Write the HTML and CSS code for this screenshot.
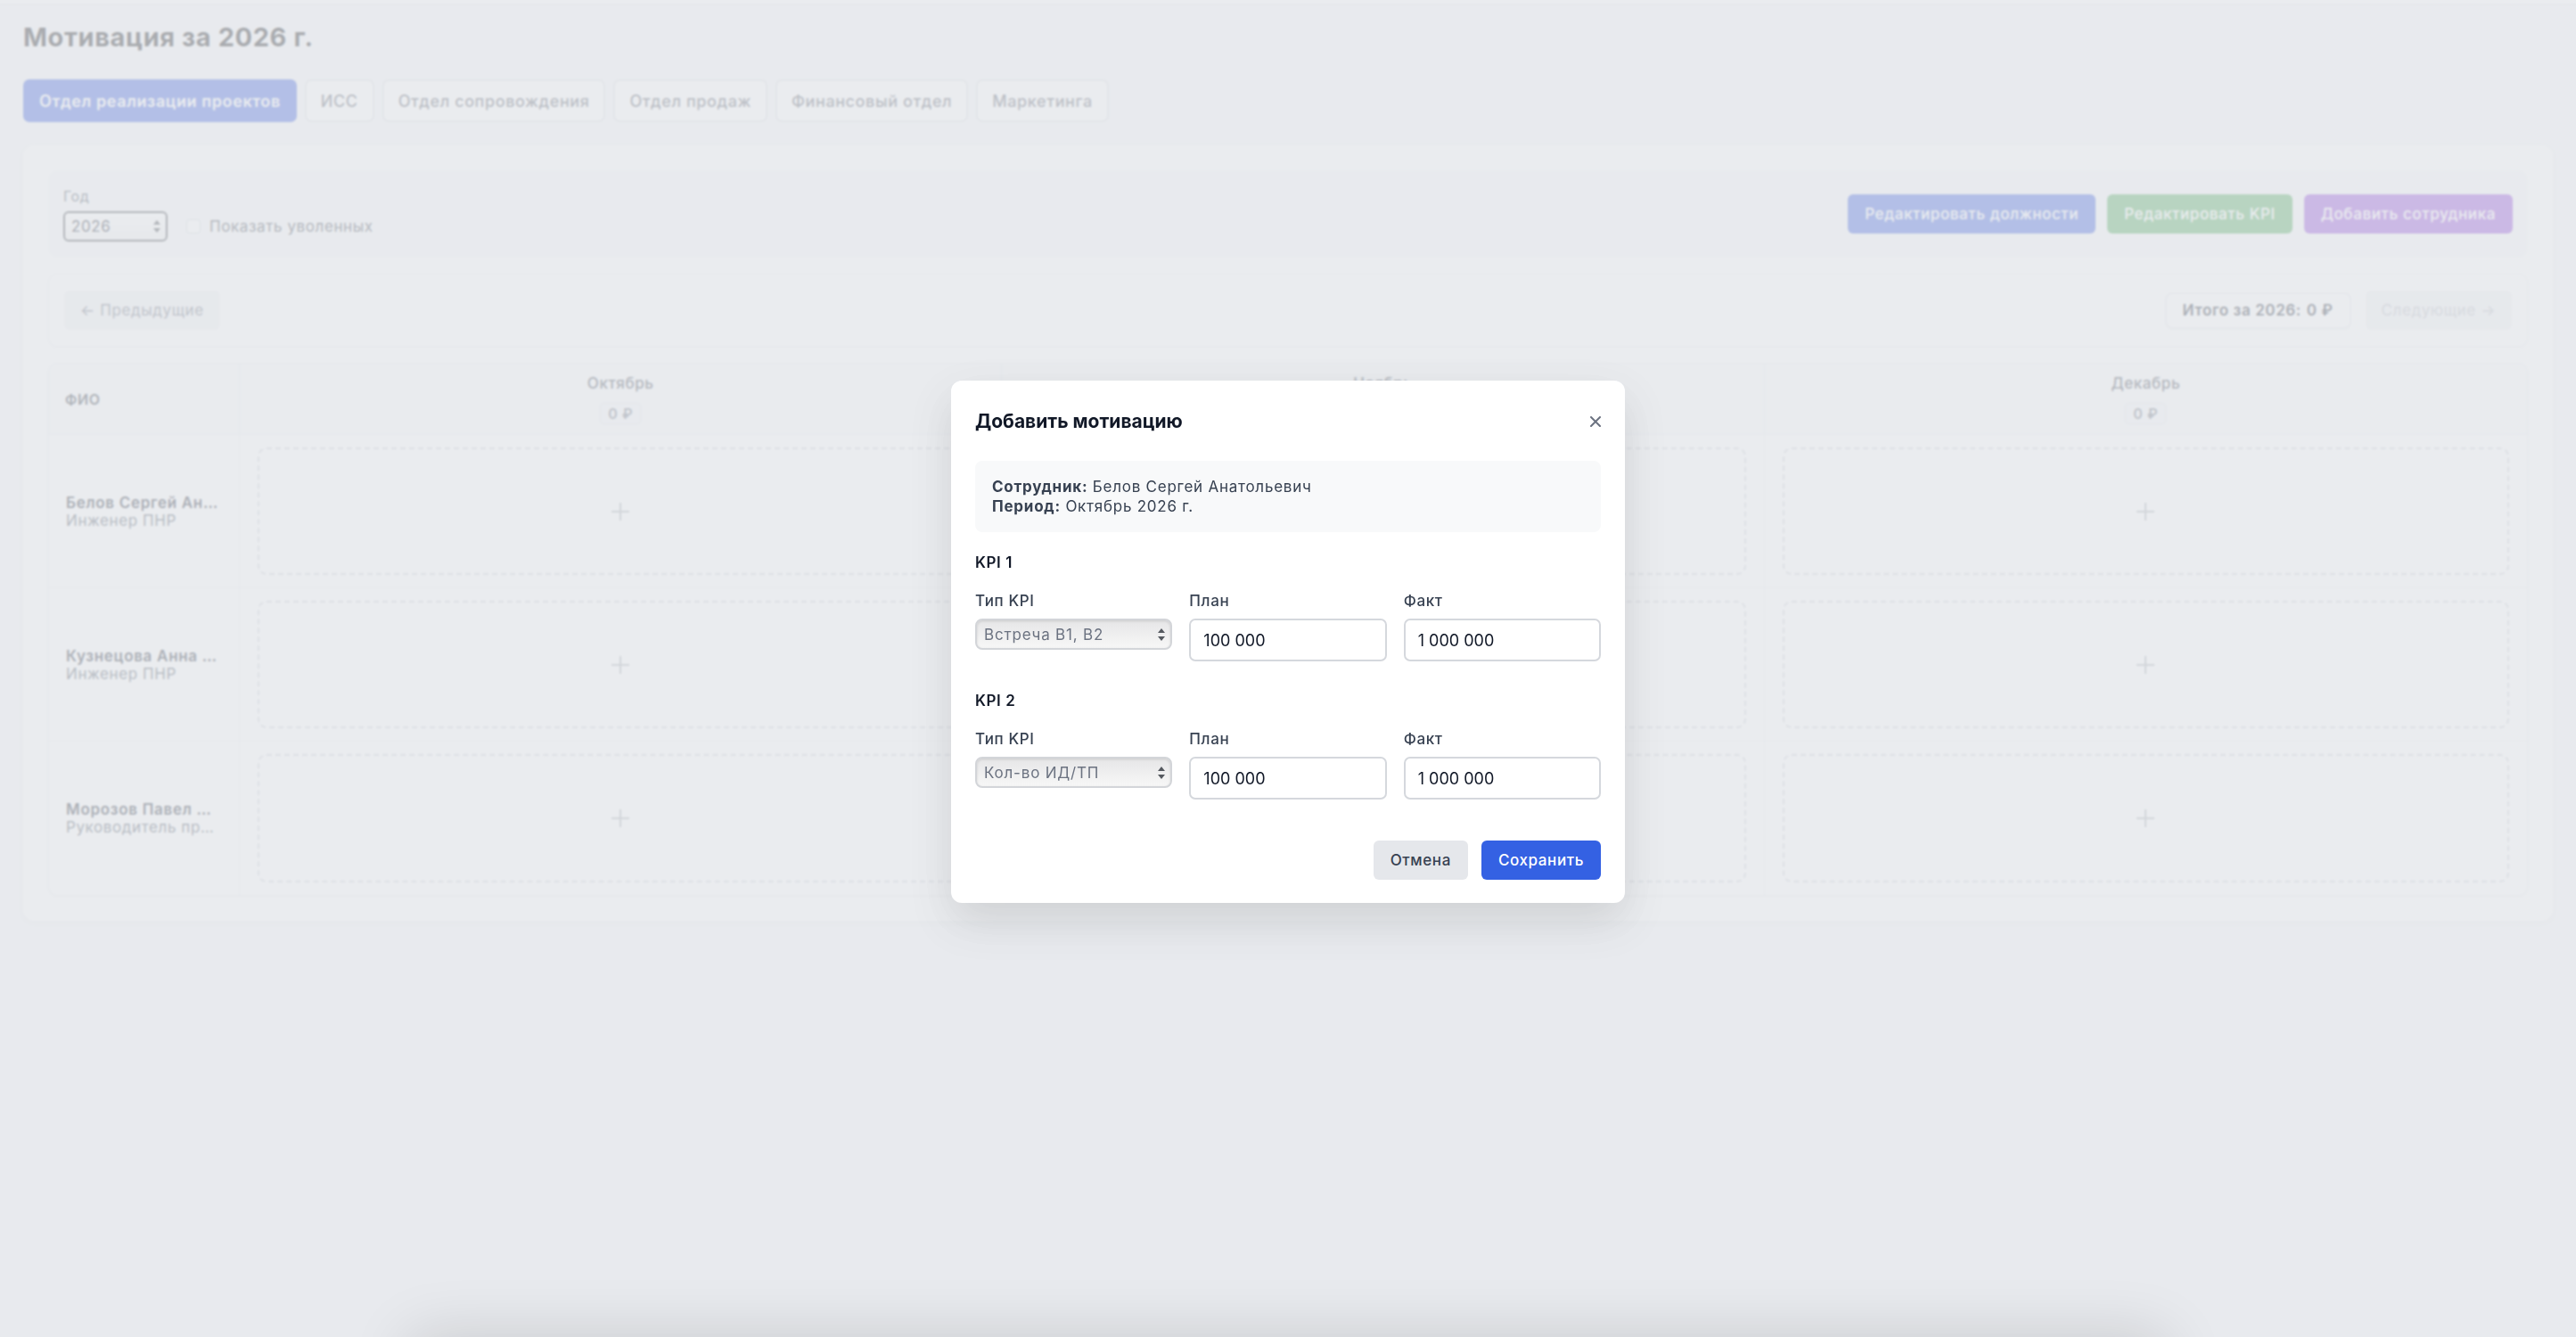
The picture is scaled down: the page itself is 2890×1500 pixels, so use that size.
FILE: index.html
```html
<!DOCTYPE html>
<html lang="ru">
<head>
  <meta charset="UTF-8">
  <meta name="viewport" content="width=device-width, initial-scale=1.0">
  <title>Мотивация за 2026 г.</title>
  <link rel="stylesheet" href="styles.css">
</head>
<body>

<div class="topbar"></div>

<main class="page">
  <h1 class="page-title">Мотивация за 2026 г.</h1>

  <nav class="dept-tabs">
    <button class="dept-tab active">Отдел реализации проектов</button>
    <button class="dept-tab">ИСС</button>
    <button class="dept-tab">Отдел сопровождения</button>
    <button class="dept-tab">Отдел продаж</button>
    <button class="dept-tab">Финансовый отдел</button>
    <button class="dept-tab">Маркетинга</button>
  </nav>

  <section class="motivation-card">
    <div class="filters">
      <div class="filters-left">
        <label class="field-label">Год</label>
        <div class="filters-row">
          <div class="select-wrap year-select">
            <select>
              <option>2026</option>
              <option>2025</option>
            </select>
            <svg class="select-arrows" width="8" height="14" viewBox="0 0 8 14"><path d="M4 0L8 5H0Z M4 14L8 9H0Z" fill="#3a3e45"/></svg>
          </div>
          <label class="checkbox"><input type="checkbox"> Показать уволенных</label>
        </div>
      </div>
      <div class="filters-actions">
        <button class="btn btn-blue">Редактировать должности</button>
        <button class="btn btn-green">Редактировать KPI</button>
        <button class="btn btn-purple">Добавить сотрудника</button>
      </div>
    </div>

    <div class="pager">
      <button class="pager-btn">← Предыдущие</button>
      <div class="pager-right">
        <div class="year-total">Итого за 2026: <span>0 ₽</span></div>
        <button class="pager-btn next">Следующие →</button>
      </div>
    </div>

    <div class="kpi-table">
      <div class="th th-fio">ФИО</div>
      <div class="th th-month"><span class="month-name">Октябрь</span><span class="month-sum">0 ₽</span></div>
      <div class="th th-month"><span class="month-name">Ноябрь</span><span class="month-sum">0 ₽</span></div>
      <div class="th th-month last"><span class="month-name">Декабрь</span><span class="month-sum">0 ₽</span></div>

      <div class="td name-cell">
        <div class="emp-name">Белов Сергей Анатольевич</div>
        <div class="emp-role">Инженер ПНР</div>
      </div>
      <div class="td slot-cell"><div class="add-slot"><svg width="20" height="20" viewBox="0 0 20 20"><path d="M10 0V20M0 10H20" stroke="#a9adb4" stroke-width="2"/></svg></div></div>
      <div class="td slot-cell"><div class="add-slot"><svg width="20" height="20" viewBox="0 0 20 20"><path d="M10 0V20M0 10H20" stroke="#a9adb4" stroke-width="2"/></svg></div></div>
      <div class="td slot-cell last"><div class="add-slot"><svg width="20" height="20" viewBox="0 0 20 20"><path d="M10 0V20M0 10H20" stroke="#a9adb4" stroke-width="2"/></svg></div></div>

      <div class="td name-cell">
        <div class="emp-name">Кузнецова Анна Викторовна</div>
        <div class="emp-role">Инженер ПНР</div>
      </div>
      <div class="td slot-cell"><div class="add-slot"><svg width="20" height="20" viewBox="0 0 20 20"><path d="M10 0V20M0 10H20" stroke="#a9adb4" stroke-width="2"/></svg></div></div>
      <div class="td slot-cell"><div class="add-slot"><svg width="20" height="20" viewBox="0 0 20 20"><path d="M10 0V20M0 10H20" stroke="#a9adb4" stroke-width="2"/></svg></div></div>
      <div class="td slot-cell last"><div class="add-slot"><svg width="20" height="20" viewBox="0 0 20 20"><path d="M10 0V20M0 10H20" stroke="#a9adb4" stroke-width="2"/></svg></div></div>

      <div class="td name-cell bottom">
        <div class="emp-name">Морозов Павел Игоревич</div>
        <div class="emp-role">Руководитель проекта</div>
      </div>
      <div class="td slot-cell bottom"><div class="add-slot"><svg width="20" height="20" viewBox="0 0 20 20"><path d="M10 0V20M0 10H20" stroke="#a9adb4" stroke-width="2"/></svg></div></div>
      <div class="td slot-cell bottom"><div class="add-slot"><svg width="20" height="20" viewBox="0 0 20 20"><path d="M10 0V20M0 10H20" stroke="#a9adb4" stroke-width="2"/></svg></div></div>
      <div class="td slot-cell bottom last"><div class="add-slot"><svg width="20" height="20" viewBox="0 0 20 20"><path d="M10 0V20M0 10H20" stroke="#a9adb4" stroke-width="2"/></svg></div></div>
    </div>
  </section>
</main>

<div class="modal-overlay">
  <div class="modal">
    <div class="modal-header">
      <h2 class="modal-title">Добавить мотивацию</h2>
      <button class="modal-close" aria-label="Закрыть">
        <svg width="12" height="12" viewBox="0 0 12 12"><path d="M1 1L11 11M11 1L1 11" stroke="#6b7280" stroke-width="2" stroke-linecap="round"/></svg>
      </button>
    </div>

    <div class="modal-info">
      <div><b>Сотрудник:</b> Белов Сергей Анатольевич</div>
      <div><b>Период:</b> Октябрь 2026 г.</div>
    </div>

    <div class="kpi-block">
      <div class="kpi-title">KPI 1</div>
      <div class="kpi-grid">
        <div>
          <label class="kpi-label">Тип KPI</label>
          <div class="select-wrap kpi-select">
            <select>
              <option>Встреча В1, В2</option>
              <option>Кол-во ИД/ТП</option>
            </select>
            <svg class="select-arrows" width="8" height="14" viewBox="0 0 8 14"><path d="M4 0L8 5H0Z M4 14L8 9H0Z" fill="#55595f"/></svg>
          </div>
        </div>
        <div>
          <label class="kpi-label">План</label>
          <input class="kpi-input" type="text" value="100 000">
        </div>
        <div>
          <label class="kpi-label">Факт</label>
          <input class="kpi-input" type="text" value="1 000 000">
        </div>
      </div>
    </div>

    <div class="kpi-block">
      <div class="kpi-title">KPI 2</div>
      <div class="kpi-grid">
        <div>
          <label class="kpi-label">Тип KPI</label>
          <div class="select-wrap kpi-select">
            <select>
              <option>Кол-во ИД/ТП</option>
              <option>Встреча В1, В2</option>
            </select>
            <svg class="select-arrows" width="8" height="14" viewBox="0 0 8 14"><path d="M4 0L8 5H0Z M4 14L8 9H0Z" fill="#55595f"/></svg>
          </div>
        </div>
        <div>
          <label class="kpi-label">План</label>
          <input class="kpi-input" type="text" value="100 000">
        </div>
        <div>
          <label class="kpi-label">Факт</label>
          <input class="kpi-input" type="text" value="1 000 000">
        </div>
      </div>
    </div>

    <div class="modal-footer">
      <button class="btn-cancel">Отмена</button>
      <button class="btn-save">Сохранить</button>
    </div>
  </div>
</div>

<div class="bottom-sheet"></div>

</body>
</html>
```

FILE: styles.css
```css
* {
  box-sizing: border-box;
}

body {
  margin: 0;
  min-height: 100vh;
  background-color: #f7f8fa;
  font-family: Inter, "Liberation Sans", sans-serif;
  letter-spacing: 0.6px;
  color: #1f2023;
}

button,
select {
  font-family: inherit;
  letter-spacing: inherit;
}

input {
  font-family: inherit;
}

.topbar {
  height: 4px;
  background-color: #fff;
  box-shadow: 0 1px 3px rgba(0, 0, 0, 0.08);
}

.page {
  padding: 20px 26px 26px;
}

.page-title {
  margin: 0;
  font-size: 29px;
  font-weight: 700;
  line-height: 36px;
  color: #1a1b1e;
}

/* department tabs */
.dept-tabs {
  display: flex;
  gap: 9px;
  margin-top: 29px;
}

.dept-tab {
  height: 48px;
  margin: 0;
  padding: 0 16px;
  border: 2px solid #e3e5e9;
  border-radius: 7px;
  background-color: #fff;
  font-size: 18px;
  font-weight: 500;
  color: #5b616d;
}

.dept-tab.active {
  background-color: #3b5fe0;
  border-color: #3b5fe0;
  color: #fff;
  font-weight: 600;
}

/* main card */
.motivation-card {
  margin-top: 26px;
  padding: 28px;
  background-color: #fff;
  border-radius: 12px;
  box-shadow: 0 2px 8px rgba(0, 0, 0, 0.06);
  display: flex;
  flex-direction: column;
  gap: 18px;
}

.filters {
  display: flex;
  justify-content: space-between;
  align-items: center;
  padding: 18px 17px;
  background-color: #f7f8fa;
  border-radius: 10px;
}

.field-label {
  display: block;
  font-size: 16px;
  line-height: 22px;
  color: #4b5563;
  margin-bottom: 6px;
}

.filters-row {
  display: flex;
  align-items: center;
  gap: 21px;
}

.select-wrap {
  position: relative;
}

.select-wrap select {
  appearance: none;
  -webkit-appearance: none;
  width: 100%;
  height: 100%;
  margin: 0;
  outline: none;
}

.select-arrows {
  position: absolute;
  right: 8px;
  top: 50%;
  transform: translateY(-50%);
  pointer-events: none;
}

.year-select {
  width: 117px;
  height: 34px;
}

.year-select select {
  padding: 0 7px;
  border: 2px solid #3f434a;
  border-radius: 6px;
  background: linear-gradient(#ffffff, #f1f1f2);
  font-size: 17px;
  color: #1f2937;
}

.checkbox {
  display: flex;
  align-items: center;
  gap: 10px;
  font-size: 17px;
  color: #3f4652;
}

.checkbox input {
  appearance: none;
  -webkit-appearance: none;
  width: 16px;
  height: 16px;
  margin: 0;
  border: 1px solid #d1d5db;
  border-radius: 4px;
  background-color: #fff;
}

.filters-actions {
  display: flex;
  gap: 13px;
}

.btn {
  height: 44px;
  margin: 0;
  padding: 0 19px;
  border: 0;
  border-radius: 6px;
  font-size: 17px;
  font-weight: 500;
  color: #fff;
}

.btn-blue {
  background-color: #3b5fe0;
}

.btn-green {
  background-color: #4caa5a;
}

.btn-purple {
  background-color: #9148dc;
}

/* pager */
.pager {
  display: flex;
  justify-content: space-between;
  align-items: center;
  padding: 18px 17px;
  background-color: #fff;
  border: 1px solid #eef0f3;
  border-radius: 10px;
  box-shadow: 0 1px 3px rgba(0, 0, 0, 0.05);
}

.pager-btn {
  height: 44px;
  margin: 0;
  padding: 0 18px;
  border: 0;
  border-radius: 6px;
  background-color: #f1f2f4;
  font-size: 17px;
  color: #6b7280;
}

.pager-btn.next {
  color: #b9bdc4;
}

.pager-right {
  display: flex;
  align-items: center;
  gap: 16px;
}

.year-total {
  display: flex;
  align-items: center;
  gap: 6px;
  height: 41px;
  padding: 0 18px;
  border: 2px solid #eceef1;
  border-radius: 8px;
  background-color: #fff;
  box-shadow: 0 1px 2px rgba(0, 0, 0, 0.05);
  font-size: 17px;
  font-weight: 600;
  color: #1f2937;
}

/* table */
.kpi-table {
  display: grid;
  grid-template-columns: 214px repeat(3, 1fr);
  grid-template-rows: 80px repeat(3, 172px);
  border: 1px solid #eceef1;
  border-radius: 10px;
  overflow: hidden;
  background-color: #fff;
  box-shadow: 0 1px 3px rgba(0, 0, 0, 0.06);
}

.th,
.td {
  border-right: 1px solid #eef0f3;
  border-bottom: 1px solid #eef0f3;
  min-width: 0;
}

.th.last,
.td.last {
  border-right: 0;
}

.td.bottom {
  border-bottom: 0;
}

.th {
  background-color: #f9fafb;
}

.th-fio {
  display: flex;
  align-items: center;
  padding-left: 18px;
  font-size: 16px;
  font-weight: 600;
  color: #2f3642;
}

.th-month {
  display: flex;
  flex-direction: column;
  align-items: center;
  justify-content: center;
  gap: 11px;
}

.month-name {
  font-size: 17px;
  font-weight: 500;
  line-height: 22px;
  color: #3f4652;
}

.month-sum {
  height: 24px;
  padding: 0 8px;
  border: 1px solid #e5e7eb;
  border-radius: 4px;
  background-color: #f7f8fa;
  font-size: 16px;
  font-weight: 600;
  line-height: 22px;
  color: #6b7280;
}

.name-cell {
  display: flex;
  flex-direction: column;
  justify-content: center;
  padding: 0 19px;
}

.emp-name,
.emp-role {
  font-size: 17px;
  line-height: 20px;
  white-space: nowrap;
  overflow: hidden;
  text-overflow: ellipsis;
}

.emp-name {
  font-weight: 600;
  letter-spacing: 0.7px;
  color: #1f2937;
}

.emp-role {
  color: #4b5563;
}

.slot-cell {
  padding: 14px 20px;
}

.add-slot {
  height: 100%;
  display: flex;
  align-items: center;
  justify-content: center;
  border: 2px dashed #cfd2d8;
  border-radius: 10px;
}

/* modal */
.modal-overlay {
  position: fixed;
  inset: 0;
  display: flex;
  align-items: center;
  justify-content: center;
  padding-bottom: 60px;
  background-color: rgba(226, 228, 233, 0.72);
  backdrop-filter: blur(1px);
  z-index: 10;
}

.modal {
  width: 756px;
  padding: 31px 27px 26px;
  background-color: #fff;
  border-radius: 12px;
  box-shadow: 0 20px 50px rgba(0, 0, 0, 0.12);
}

.modal-header {
  display: flex;
  justify-content: space-between;
  align-items: center;
  height: 30px;
}

.modal-title {
  margin: 0;
  font-size: 21px;
  font-weight: 700;
  line-height: 30px;
  letter-spacing: 0;
  color: #111827;
}

.modal-close {
  padding: 0;
  border: 0;
  background: none;
  line-height: 0;
}

.modal-info {
  margin-top: 29px;
  padding: 18px 19px;
  background-color: #f8f9fa;
  border-radius: 8px;
  font-size: 17px;
  line-height: 22px;
  letter-spacing: 0.75px;
  color: #374151;
}

.modal-info b {
  font-weight: 700;
}

.kpi-block {
  margin-top: 23px;
}

.kpi-block + .kpi-block {
  margin-top: 33px;
}

.kpi-title {
  font-size: 17px;
  font-weight: 600;
  line-height: 22px;
  color: #111827;
}

.kpi-grid {
  display: grid;
  grid-template-columns: repeat(3, 1fr);
  gap: 19px;
  margin-top: 21px;
  align-items: start;
}

.kpi-label {
  display: block;
  margin-bottom: 9px;
  font-size: 17px;
  font-weight: 500;
  line-height: 22px;
  color: #374151;
}

.kpi-select {
  height: 35px;
}

.kpi-select select {
  padding: 0 8px;
  border: 2px solid #d3d5d9;
  border-radius: 8px;
  background: linear-gradient(#e6e6e7, #f7f7f7);
  box-shadow: inset 0 1px 3px rgba(0, 0, 0, 0.12);
  font-size: 17px;
  letter-spacing: 0.8px;
  color: #6b7280;
}

.kpi-input {
  width: 100%;
  height: 48px;
  padding: 0 14px;
  border: 2px solid #d5d8dd;
  border-radius: 7px;
  font-size: 18px;
  color: #111827;
  outline: none;
}

.modal-footer {
  display: flex;
  justify-content: flex-end;
  gap: 15px;
  margin-top: 46px;
}

.btn-cancel,
.btn-save {
  height: 44px;
  margin: 0;
  padding: 0 19px;
  border: 0;
  border-radius: 6px;
  font-size: 17px;
  font-weight: 500;
}

.btn-cancel {
  background-color: #e5e7eb;
  color: #374151;
}

.btn-save {
  background-color: #3461e3;
  color: #fff;
}

/* sheet hidden below the fold, only its shadow shows */
.bottom-sheet {
  position: fixed;
  left: 470px;
  right: 470px;
  bottom: -70px;
  height: 60px;
  background-color: #fff;
  box-shadow: 0 0 70px 10px rgba(0, 0, 0, 0.14);
  z-index: 20;
}
```
